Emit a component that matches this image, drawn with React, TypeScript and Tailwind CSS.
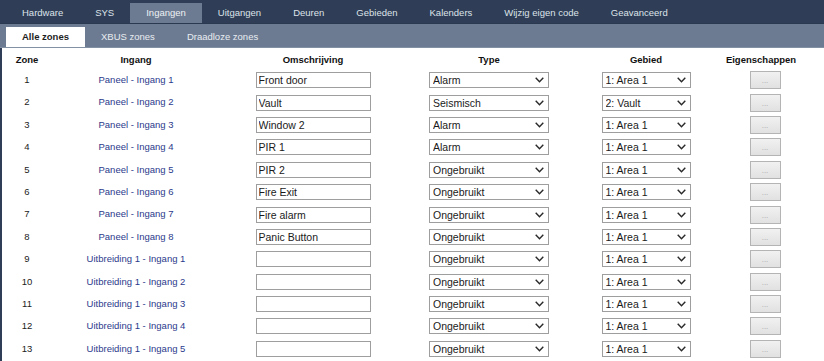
import React from "react";

const topTabs = ["Hardware", "SYS", "Ingangen", "Uitgangen", "Deuren", "Gebieden", "Kalenders", "Wijzig eigen code", "Geavanceerd"];
const subTabs = ["Alle zones", "XBUS zones", "Draadloze zones"];

type Row = { zone: number; ingang: string; desc: string; type: string; area: string };

const rows: Row[] = [
  { zone: 1, ingang: "Paneel - Ingang 1", desc: "Front door", type: "Alarm", area: "1: Area 1" },
  { zone: 2, ingang: "Paneel - Ingang 2", desc: "Vault", type: "Seismisch", area: "2: Vault" },
  { zone: 3, ingang: "Paneel - Ingang 3", desc: "Window 2", type: "Alarm", area: "1: Area 1" },
  { zone: 4, ingang: "Paneel - Ingang 4", desc: "PIR 1", type: "Alarm", area: "1: Area 1" },
  { zone: 5, ingang: "Paneel - Ingang 5", desc: "PIR 2", type: "Ongebruikt", area: "1: Area 1" },
  { zone: 6, ingang: "Paneel - Ingang 6", desc: "Fire Exit", type: "Ongebruikt", area: "1: Area 1" },
  { zone: 7, ingang: "Paneel - Ingang 7", desc: "Fire alarm", type: "Ongebruikt", area: "1: Area 1" },
  { zone: 8, ingang: "Paneel - Ingang 8", desc: "Panic Button", type: "Ongebruikt", area: "1: Area 1" },
  { zone: 9, ingang: "Uitbreiding 1 - Ingang 1", desc: "", type: "Ongebruikt", area: "1: Area 1" },
  { zone: 10, ingang: "Uitbreiding 1 - Ingang 2", desc: "", type: "Ongebruikt", area: "1: Area 1" },
  { zone: 11, ingang: "Uitbreiding 1 - Ingang 3", desc: "", type: "Ongebruikt", area: "1: Area 1" },
  { zone: 12, ingang: "Uitbreiding 1 - Ingang 4", desc: "", type: "Ongebruikt", area: "1: Area 1" },
  { zone: 13, ingang: "Uitbreiding 1 - Ingang 5", desc: "", type: "Ongebruikt", area: "1: Area 1" },
];

const typeOptions = ["Alarm", "Seismisch", "Ongebruikt"];
const areaOptions = ["1: Area 1", "2: Vault"];

function Chevron() {
  return (
    <svg className="pointer-events-none absolute right-[5px] top-1/2 -translate-y-1/2" width="9" height="6" viewBox="0 0 9 6">
      <path d="M0.7 0.8 L4.5 4.8 L8.3 0.8" fill="none" stroke="#2a2a2a" strokeWidth="1.4" />
    </svg>
  );
}

function Select({ value, options, width }: { value: string; options: string[]; width: string }) {
  return (
    <div className={`relative h-[16px] ${width}`}>
      <select
        defaultValue={value}
        className="h-full w-full appearance-none border border-[#9e9e9e] bg-white pl-[3px] text-[10.5px] leading-[14px] text-[#1a1a1a] outline-none"
        style={{ fontFamily: '"Liberation Sans", Arial, sans-serif' }}
      >
        {options.map((o) => (
          <option key={o}>{o}</option>
        ))}
      </select>
      <Chevron />
    </div>
  );
}

export default function App() {
  return (
    <div className="w-[824px] h-[361px] overflow-hidden bg-white" style={{ fontFamily: '"Liberation Sans", Arial, sans-serif' }}>
      {/* top nav */}
      <div className="flex h-[24px] items-end bg-[#2f3e56] pl-[6px] border-b border-[#2a3850]">
        {topTabs.map((t) => (
          <div
            key={t}
            className={`flex h-[20px] items-center px-4 text-[9.5px] ${t === "Ingangen" ? "bg-[#6c7b91] text-[#eef1f5]" : "text-[#dde2ea]"}`}
          >
            {t}
          </div>
        ))}
      </div>
      {/* sub nav */}
      <div className="flex h-[24px] items-end bg-[#6c7b91] pl-[6px] border-b border-[#8391a5]">
        {subTabs.map((t) => (
          <div
            key={t}
            className={`flex h-[20px] items-center px-4 text-[9.5px] ${t === "Alle zones" ? "bg-white font-bold text-[#1e1e1e]" : "text-[#e9ecf1]"}`}
          >
            {t}
          </div>
        ))}
      </div>
      {/* content */}
      <div className="h-full border-l-2 border-[#2f3e56] pt-[4px]">
        <div className="grid grid-cols-[50px_168px_186px_166px_148px_82px] h-[17px] items-center text-[9.5px] font-bold text-[#111]">
          <div className="text-center">Zone</div>
          <div className="text-center">Ingang</div>
          <div className="text-center">Omschrijving</div>
          <div className="text-center">Type</div>
          <div className="text-center">Gebied</div>
          <div className="text-center">Eigenschappen</div>
        </div>
        {rows.map((r) => (
          <div key={r.zone} className="grid grid-cols-[50px_168px_186px_166px_148px_82px] h-[22.4px] items-center text-[9.5px]">
            <div className="text-center text-[#222]">{r.zone}</div>
            <div className="text-center text-[#2b3a8c]">{r.ingang}</div>
            <div className="flex justify-center">
              <input
                defaultValue={r.desc}
                className="h-[16px] w-[115px] border border-[#9e9e9e] bg-white px-[2px] text-[10.5px] text-[#1a1a1a] outline-none"
                style={{ fontFamily: '"Liberation Sans", Arial, sans-serif' }}
              />
            </div>
            <div className="flex justify-center">
              <Select value={r.type} options={typeOptions} width="w-[120px]" />
            </div>
            <div className="flex justify-center">
              <Select value={r.area} options={areaOptions} width="w-[89px]" />
            </div>
            <div className="flex justify-center pl-[8px]">
              <button className="flex h-[18px] w-[31px] items-end justify-center border border-[#b4b4b4] bg-gradient-to-b from-[#f1f1f1] to-[#e1e1e1] pb-[3px] text-[8px] leading-none text-[#a8a8a8]">
                ...
              </button>
            </div>
          </div>
        ))}
      </div>
    </div>
  );
}
